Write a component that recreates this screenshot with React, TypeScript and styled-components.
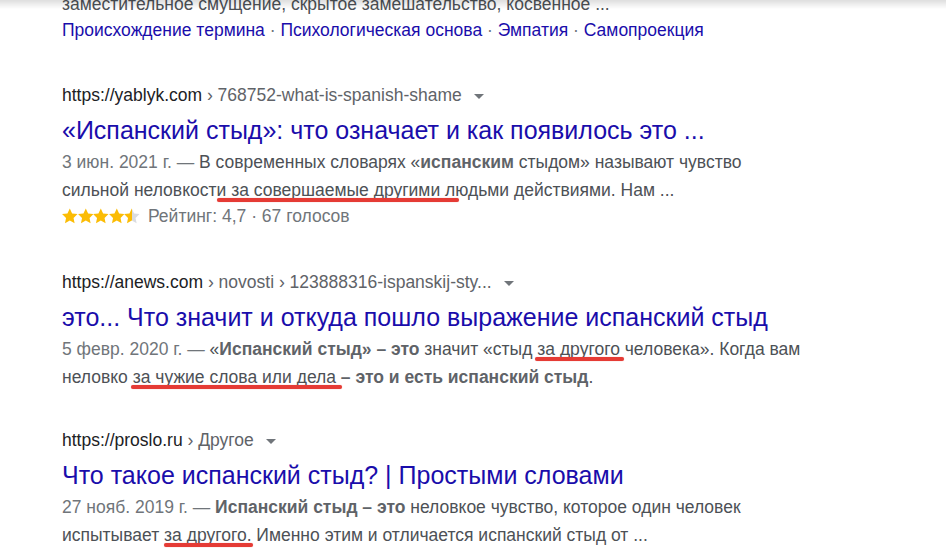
import React from 'react';
import styled, { createGlobalStyle } from 'styled-components';

const GlobalStyle = createGlobalStyle`
  html, body {
    margin: 0;
    padding: 0;
    background: #ffffff;
    overflow: hidden;
  }
  body {
    font-family: 'Liberation Sans', Arial, sans-serif;
    -webkit-font-smoothing: antialiased;
  }
`;

const TopShade = styled.div`
  position: fixed;
  top: 0;
  left: 0;
  right: 0;
  height: 9px;
  background: linear-gradient(to bottom, rgba(0, 0, 0, 0.13), rgba(0, 0, 0, 0));
  pointer-events: none;
`;

const Page = styled.div`
  margin-top: -10px;
  padding-left: 62px;
  width: 750px;
`;

const CutLine = styled.div`
  font-size: 17.5px;
  line-height: 28px;
  color: #4d5156;
  white-space: nowrap;
`;

const SiteLinks = styled.div`
  font-size: 17.5px;
  line-height: 24px;
  color: #70757a;
  white-space: nowrap;
`;

const SiteLink = styled.a`
  color: #1a0dab;
  text-decoration: none;
`;

const Result = styled.div<{ $gap: number }>`
  margin-top: ${(p) => p.$gap}px;
`;

const UrlLine = styled.div`
  display: flex;
  align-items: center;
  font-size: 17.5px;
  line-height: 24px;
  color: #202124;
  white-space: nowrap;
`;

const Crumbs = styled.span`
  color: #5f6368;
`;

const Caret = styled.span`
  display: inline-block;
  width: 0;
  height: 0;
  margin-left: 12px;
  margin-top: 2px;
  border-left: 5px solid transparent;
  border-right: 5px solid transparent;
  border-top: 5px solid #70757a;
`;

const Title = styled.a`
  display: block;
  margin-top: 7px;
  font-size: 25px;
  line-height: 32px;
  color: #1a0dab;
  text-decoration: none;
  white-space: nowrap;
`;

const Snippet = styled.div`
  margin-top: 2px;
  font-size: 17.5px;
  line-height: 28px;
  color: #4d5156;
  white-space: nowrap;
`;

const Date = styled.span`
  color: #70757a;
`;

const Em = styled.b`
  color: #5f6368;
`;

const Marked = styled.span<{ $l?: number; $r?: number }>`
  position: relative;
  &::after {
    content: '';
    position: absolute;
    left: ${(p) => p.$l ?? -2}px;
    right: ${(p) => p.$r ?? -4}px;
    bottom: -2px;
    height: 4px;
    border-radius: 2px;
    background: #e53b35;
    box-shadow: 0 0 1px rgba(229, 59, 53, 0.6);
  }
`;

const Rating = styled.div`
  display: flex;
  align-items: center;
  gap: 8px;
  font-size: 17.5px;
  line-height: 24px;
  color: #70757a;
`;

const Stars = styled.span`
  display: flex;
`;

const Star = ({ half }: { half?: boolean }) => (
  <svg width="15.6" height="16" viewBox="0 0 24 24">
    <defs>
      <linearGradient id="halfStar">
        <stop offset="50%" stopColor="#fbbc04" />
        <stop offset="50%" stopColor="#dadce0" />
      </linearGradient>
    </defs>
    <path
      d="M12 0.5l3.6 7.6 8.3 1-6.1 5.8 1.6 8.3L12 19.1l-7.4 4.1 1.6-8.3L0.1 9.1l8.3-1z"
      fill={half ? 'url(#halfStar)' : '#fbbc04'}
    />
  </svg>
);

const Dot = () => <span> · </span>;

export default function App() {
  return (
    <>
      <GlobalStyle />
      <Page>
        <CutLine>заместительное смущение, скрытое замешательство, косвенное ...</CutLine>
        <SiteLinks>
          <SiteLink>Происхождение термина</SiteLink>
          <Dot />
          <SiteLink>Психологическая основа</SiteLink>
          <Dot />
          <SiteLink>Эмпатия</SiteLink>
          <Dot />
          <SiteLink>Самопроекция</SiteLink>
        </SiteLinks>

        <Result $gap={41}>
          <UrlLine>
            https://yablyk.com<Crumbs>&nbsp;› 768752-what-is-spanish-shame</Crumbs>
            <Caret />
          </UrlLine>
          <Title>«Испанский стыд»: что означает и как появилось это ...</Title>
          <Snippet>
            <Date>3 июн. 2021 г. — </Date>В современных словарях «<Em>испанским</Em> стыдом» называют чувство
            <br />
            сильной неловкости <Marked $l={-14} $r={-19}>за совершаемые другими</Marked> людьми действиями. Нам ...
          </Snippet>
          <Rating>
            <Stars>
              <Star />
              <Star />
              <Star />
              <Star />
              <Star half />
            </Stars>
            <span>Рейтинг: 4,7 · 67 голосов</span>
          </Rating>
        </Result>

        <Result $gap={42}>
          <UrlLine>
            https://anews.com<Crumbs>&nbsp;› novosti › 123888316-ispanskij-sty...</Crumbs>
            <Caret />
          </UrlLine>
          <Title>это... Что значит и откуда пошло выражение испанский стыд</Title>
          <Snippet>
            <Date>5 февр. 2020 г. — </Date>«<Em>Испанский стыд»</Em> <Em>– это</Em> значит «стыд{' '}
            <Marked>за другого</Marked> человека». Когда вам
            <br />
            неловко <Marked $r={-6}>за чужие слова или дела</Marked> <Em>– это и есть испанский стыд</Em>.
          </Snippet>
        </Result>

        <Result $gap={37}>
          <UrlLine>
            https://proslo.ru<Crumbs>&nbsp;› Другое</Crumbs>
            <Caret />
          </UrlLine>
          <Title>Что такое испанский стыд? | Простыми словами</Title>
          <Snippet>
            <Date>27 нояб. 2019 г. — </Date>
            <Em>Испанский стыд – это</Em> неловкое чувство, которое один человек
            <br />
            испытывает <Marked $l={0} $r={-1}>за другого.</Marked> Именно этим и отличается испанский стыд от ...
          </Snippet>
        </Result>
      </Page>
      <TopShade />
    </>
  );
}
